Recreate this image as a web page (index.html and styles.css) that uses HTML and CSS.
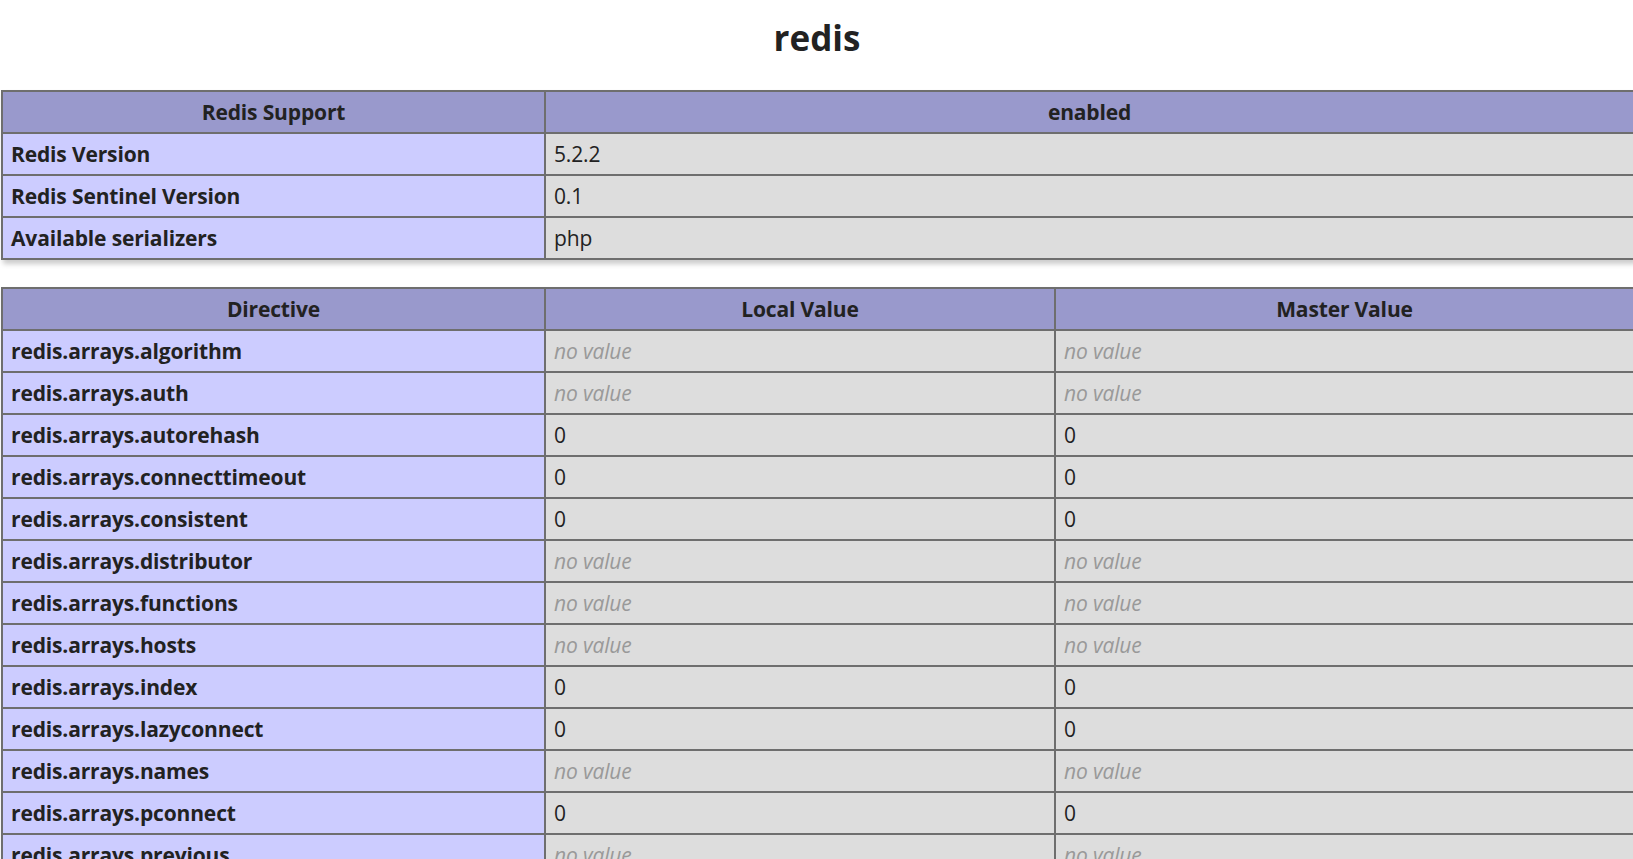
FILE: index.html
```html
<!DOCTYPE html>
<html>
<head>
<meta charset="utf-8">
<title>redis</title>
<link rel="stylesheet" href="styles.css">
</head>
<body>
<div class="center">
  <h2 class="title">redis</h2>
  <table class="info">
    <colgroup><col class="c1"><col></colgroup>
    <tr><th class="h">Redis Support</th><th class="h">enabled</th></tr>
    <tr><td class="e">Redis Version</td><td class="v">5.2.2</td></tr>
    <tr><td class="e">Redis Sentinel Version</td><td class="v">0.1</td></tr>
    <tr><td class="e">Available serializers</td><td class="v">php</td></tr>
  </table>
  <table class="info">
    <colgroup><col class="c1"><col class="c2"><col></colgroup>
    <tr><th class="h">Directive</th><th class="h">Local Value</th><th class="h">Master Value</th></tr>
    <tr><td class="e">redis.arrays.algorithm</td><td class="v"><i>no value</i></td><td class="v"><i>no value</i></td></tr>
    <tr><td class="e">redis.arrays.auth</td><td class="v"><i>no value</i></td><td class="v"><i>no value</i></td></tr>
    <tr><td class="e">redis.arrays.autorehash</td><td class="v">0</td><td class="v">0</td></tr>
    <tr><td class="e">redis.arrays.connecttimeout</td><td class="v">0</td><td class="v">0</td></tr>
    <tr><td class="e">redis.arrays.consistent</td><td class="v">0</td><td class="v">0</td></tr>
    <tr><td class="e">redis.arrays.distributor</td><td class="v"><i>no value</i></td><td class="v"><i>no value</i></td></tr>
    <tr><td class="e">redis.arrays.functions</td><td class="v"><i>no value</i></td><td class="v"><i>no value</i></td></tr>
    <tr><td class="e">redis.arrays.hosts</td><td class="v"><i>no value</i></td><td class="v"><i>no value</i></td></tr>
    <tr><td class="e">redis.arrays.index</td><td class="v">0</td><td class="v">0</td></tr>
    <tr><td class="e">redis.arrays.lazyconnect</td><td class="v">0</td><td class="v">0</td></tr>
    <tr><td class="e">redis.arrays.names</td><td class="v"><i>no value</i></td><td class="v"><i>no value</i></td></tr>
    <tr><td class="e">redis.arrays.pconnect</td><td class="v">0</td><td class="v">0</td></tr>
    <tr><td class="e">redis.arrays.previous</td><td class="v"><i>no value</i></td><td class="v"><i>no value</i></td></tr>
    <tr><td class="e">redis.arrays.readtimeout</td><td class="v">0</td><td class="v">0</td></tr>
    <tr><td class="e">redis.arrays.retryinterval</td><td class="v">0</td><td class="v">0</td></tr>
  </table>
</div>
</body>
</html>
```

FILE: styles.css
```css
html, body {
  margin: 0;
  padding: 0;
  background: #fff;
}
body {
  color: #222;
  font-family: "Open Sans", "Noto Sans", sans-serif;
  overflow: hidden;
}
.center {
  padding-left: 1px;
}
.title {
  margin: 14px 0 28px 0;
  font-size: 35px;
  line-height: 48px;
  font-weight: bold;
  text-align: center;
  color: #222;
}
.info {
  border-collapse: collapse;
  table-layout: fixed;
  width: 1634px;
  margin: 0 0 27px 0;
  box-shadow: 2px 4px 5px #ccc;
}
.c1 { width: 543px; }
.c2 { width: 510px; }
.info th,
.info td {
  border: 2px solid #6e6e6e;
  font-size: 21px;
  line-height: 26px;
  height: 26px;
  padding: 7px 8px;
  vertical-align: middle;
  white-space: nowrap;
  overflow: hidden;
  letter-spacing: -0.15px;
}
.h {
  background: #99c;
  font-weight: bold;
  text-align: center;
}
.e {
  background: #ccf;
  font-weight: bold;
  text-align: left;
}
.v {
  background: #ddd;
  text-align: left;
}
.v i {
  color: #999;
}
```
